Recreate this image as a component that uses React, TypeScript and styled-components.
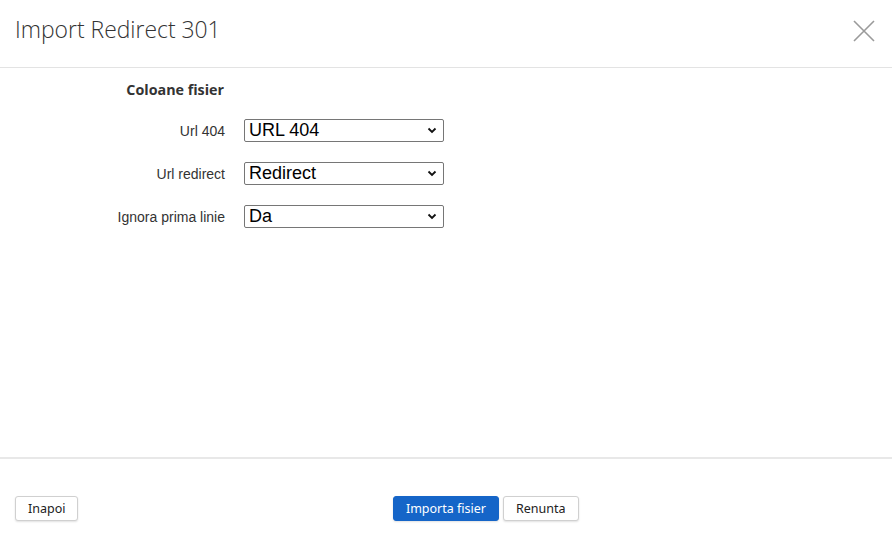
import React from "react";
import styled, { createGlobalStyle } from "styled-components";

const GlobalStyle = createGlobalStyle`
  html, body {
    margin: 0;
    padding: 0;
    background: #ffffff;
  }
  * {
    box-sizing: border-box;
  }
`;

const Modal = styled.div`
  width: 892px;
  height: 535px;
  display: flex;
  flex-direction: column;
  background: #fff;
  font-family: "Open Sans", "Liberation Sans", sans-serif;
  color: #333;
`;

const Header = styled.div`
  height: 68px;
  flex-shrink: 0;
  display: flex;
  align-items: center;
  justify-content: space-between;
  padding: 0 17px 9px 15px;
  border-bottom: 1px solid #e3e3e3;
`;

const Title = styled.h1`
  margin: 0;
  font-size: 22.9px;
  font-weight: 300;
  color: #333;
`;

const CloseButton = styled.button`
  border: none;
  background: none;
  padding: 0;
  width: 22px;
  height: 22px;
  margin-top: 3px;
  cursor: pointer;
  svg {
    display: block;
  }
`;

const Body = styled.div`
  flex: 1;
  padding-top: 12px;
`;

const Form = styled.div`
  display: grid;
  grid-template-columns: 225px 200px;
  column-gap: 19px;
  row-gap: 20px;
  align-items: center;
`;

const SectionTitle = styled.div`
  font-size: 14.3px;
  font-weight: 700;
  color: #333;
  text-align: right;
  padding-right: 1px;
`;

const Label = styled.label`
  font-family: "Liberation Sans", Arial, sans-serif;
  font-size: 14px;
  color: #333;
  text-align: right;
`;

const SelectWrap = styled.div`
  position: relative;
  width: 200px;
  height: 23px;
`;

const Select = styled.select`
  appearance: none;
  width: 100%;
  height: 100%;
  border: 1px solid #767676;
  border-radius: 2px;
  background: #fff;
  padding: 0 20px 0 4px;
  font-family: "Liberation Sans", Arial, sans-serif;
  font-size: 18px;
  color: #000;
  line-height: 21px;
`;

const Chevron = styled.svg`
  position: absolute;
  right: 7px;
  top: 8px;
  pointer-events: none;
`;

const Footer = styled.div`
  height: 78px;
  flex-shrink: 0;
  border-top: 2px solid #e8e8e8;
  display: flex;
  align-items: flex-start;
  padding: 37px 15px 0 15px;
`;

const Center = styled.div`
  flex: 1;
  display: flex;
  justify-content: center;
  gap: 4px;
  padding-left: 16px;
`;

const Button = styled.button<{ primary?: boolean }>`
  height: 25px;
  padding: 0 12px;
  border-radius: 3px;
  font-family: "Noto Sans", "Open Sans", sans-serif;
  font-size: 12.5px;
  cursor: pointer;
  border: 1px solid ${(p) => (p.primary ? "#1565c8" : "#d0d0d0")};
  background: ${(p) => (p.primary ? "#1565c8" : "#fff")};
  color: ${(p) => (p.primary ? "#fff" : "#222")};
  box-shadow: 0 1px 2px rgba(0, 0, 0, 0.12);
`;

interface IField {
  label: string;
  value: string;
}

const fields: IField[] = [
  { label: "Url 404", value: "URL 404" },
  { label: "Url redirect", value: "Redirect" },
  { label: "Ignora prima linie", value: "Da" },
];

function App() {
  return (
    <>
      <GlobalStyle />
      <Modal>
        <Header>
          <Title>Import Redirect 301</Title>
          <CloseButton aria-label="close">
            <svg width="22" height="22" viewBox="0 0 22 22">
              <path
                d="M1 1 L21 21 M21 1 L1 21"
                stroke="#9a9a9a"
                strokeWidth="1.6"
                fill="none"
              />
            </svg>
          </CloseButton>
        </Header>
        <Body>
          <Form>
            <SectionTitle>Coloane fisier</SectionTitle>
            <div></div>
            {fields.map((f) => (
              <React.Fragment key={f.label}>
                <Label>{f.label}</Label>
                <SelectWrap>
                  <Select defaultValue={f.value}>
                    <option>{f.value}</option>
                  </Select>
                  <Chevron width="10" height="7" viewBox="0 0 10 7">
                    <path
                      d="M1.5 1.5 L5 5 L8.5 1.5"
                      stroke="#111"
                      strokeWidth="1.8"
                      fill="none"
                    />
                  </Chevron>
                </SelectWrap>
              </React.Fragment>
            ))}
          </Form>
        </Body>
        <Footer>
          <Button>Inapoi</Button>
          <Center>
            <Button primary>Importa fisier</Button>
            <Button>Renunta</Button>
          </Center>
        </Footer>
      </Modal>
    </>
  );
}

export default App;
